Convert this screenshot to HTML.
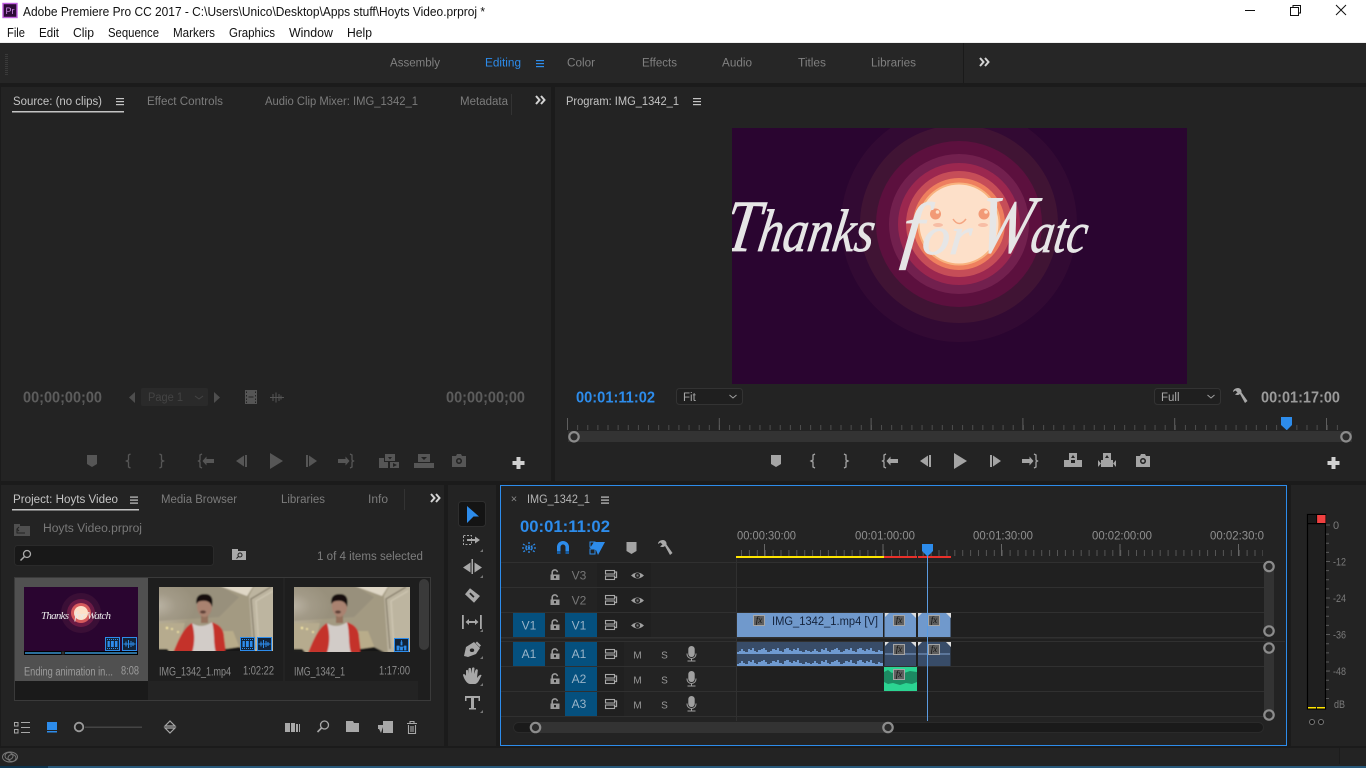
<!DOCTYPE html>
<html><head><meta charset="utf-8"><title>Adobe Premiere Pro CC 2017</title>
<style>
html,body{margin:0;padding:0;width:1366px;height:768px;overflow:hidden;background:#1b1b1b}
svg{display:block;font-family:"Liberation Sans",sans-serif;font-size:11.5px}
text{white-space:pre}
</style></head><body>
<svg width="1366" height="768" viewBox="0 0 1366 768" xmlns="http://www.w3.org/2000/svg">
<defs>
<clipPath id="vc"><rect x="732" y="128" width="455" height="256"/></clipPath>
<clipPath id="tc"><rect x="0" y="0" width="114" height="64"/></clipPath>
<clipPath id="tc3"><rect x="0" y="0" width="116" height="65"/></clipPath>
<filter id="bl1" x="-5%" y="-5%" width="110%" height="110%"><feGaussianBlur stdDeviation="0.8"/></filter>
<radialGradient id="glow" cx="0" cy="0.45" r="0.55"><stop offset="0" stop-color="#efe8da"/><stop offset="0.5" stop-color="#b9b09b"/><stop offset="1" stop-color="#a39a82"/></radialGradient>
<g id="ham"><rect x="0" y="0" width="8" height="1.2"/><rect x="0" y="3" width="8" height="1.2"/><rect x="0" y="6" width="8" height="1.2"/></g>
<g id="marker" fill="currentColor"><path d="M-5-6H5V3L0 6-5 3Z"/></g>
<g id="bl" fill="none" stroke="currentColor" stroke-width="1.3"><path d="M1.5-7-.5-6V-1L-2.5 0-.5 1V6L1.5 7"/></g>
<g id="br" fill="none" stroke="currentColor" stroke-width="1.3"><path d="M-1.5-7 .5-6V-1L2.5 0 .5 1V6L-1.5 7"/></g>
<g id="gin"><path fill="none" stroke="currentColor" stroke-width="1.3" d="M-5-7-7-6V-1L-8.5 0-7 1V6L-5 7"/><path fill="currentColor" d="M-4.5 0-.5-4.5V-2H7V2H-.5V4.5Z"/></g>
<g id="gout"><path fill="none" stroke="currentColor" stroke-width="1.3" d="M5-7 7-6V-1L8.5 0 7 1V6L5 7"/><path fill="currentColor" d="M4.5 0 .5-4.5V-2H-7V2H.5V4.5Z"/></g>
<g id="sb" fill="currentColor"><path d="M3-5.5-5 0 3 5.5Z"/><rect x="4" y="-6" width="2" height="12"/></g>
<g id="sf" fill="currentColor"><path d="M-3-5.5 5 0-3 5.5Z"/><rect x="-6" y="-6" width="2" height="12"/></g>
<g id="play" fill="currentColor"><path d="M-6-8 7 0-6 8Z"/></g>
<g id="lift" fill="currentColor"><path d="M-9 0H-2V7H-9ZM2 0H9V7H2ZM-2 7H2V3H-2Z"/><path d="M-4-7H4V0H-4ZM-2-2H2L0-5Z" fill-rule="evenodd"/></g>
<g id="extr" fill="currentColor"><path d="M-4-7H4V0H-4ZM-2-2H2L0-5Z" fill-rule="evenodd"/><path d="M-6 0H6V7H-6ZM-9 0V7L-6 3.5ZM9 0V7L6 3.5Z"/></g>
<g id="ins" fill="currentColor"><path d="M-4-7H6V0H-4ZM-1-4H3L1-1.5Z" fill-rule="evenodd"/><path d="M-10-3H-5V1H-1V7H-10ZM1 1H10V7H1ZM4 2V6L8 4Z" fill-rule="evenodd"/></g>
<g id="ovr" fill="currentColor"><path d="M-6-7H6V1H-6ZM-3-4H3L0-1Z" fill-rule="evenodd"/><path d="M-10 2H10V7H-10Z"/></g>
<g id="cam" fill="currentColor"><path d="M-7-5H-3L-2-7H2L3-5H7V6H-7ZM0-3A3 3 0 1 0 .01-3ZM0-1.5A1.5 1.5 0 1 1-.01-1.5Z" fill-rule="evenodd"/></g>
<g id="plus" fill="currentColor"><rect x="-6" y="-2" width="12" height="4"/><rect x="-2" y="-6" width="4" height="12"/></g>
<g id="wrench" fill="currentColor"><path d="M-2-8C-5-8-7-6-7-4L-4.5-5.5-2.5-3.5-5-1.5C-3-.5-1-1 0-2L5 7 7.5 5 1.5-3.5C2-6 0-8-2-8Z"/></g>
<g id="dbl" fill="none" stroke="#d4d4d4" stroke-width="2"><path d="M0-4 3.5 0 0 4M5-4 8.5 0 5 4"/></g>
<g id="chev" fill="none" stroke="#a0a0a0" stroke-width="1"><path d="M-3.5-1.5 0 1.5 3.5-1.5"/></g>
<g id="lock"><path d="M-2.8 0V-2.2A2.6 2.6 0 0 1 2.4-2.8" fill="none" stroke="#9a9a9a" stroke-width="1.6"/><path fill="#9a9a9a" d="M-4.5-.5H4.5V5H-4.5ZM-1 1V3.2H1V1Z" fill-rule="evenodd"/></g>
<g id="sync" fill="none" stroke="#a8a8a8" stroke-width="1.1"><rect x="-5.500" y="-4.500" width="9" height="3.500"/><rect x="-5.500" y="1" width="9" height="3.500"/><path d="M3.500-3H5.500V2.500H3.500" stroke-width="1.300"/></g>
<g id="eye"><path fill="#a0a0a0" d="M-6.5 0Q0-6 6.5 0 0 6-6.5 0Z"/><circle r="2.6" fill="#252525"/><circle r="1.1" fill="#777"/></g>
<g id="mic" fill="none" stroke="#a0a0a0" stroke-width="1"><rect x="-2.7" y="-7.5" width="5.4" height="10" rx="2.7" fill="#a0a0a0"/><path d="M-4.5-.5V0A4.5 4.5 0 0 0 4.5 0V-.5M0 4.5V6.5M-4 7H4"/></g>
<g id="fx"><rect x=".5" y=".5" width="11" height="10" fill="#5e5e5e" stroke="#a5a5a5"/><text x="6" y="8" text-anchor="middle" font-family="Liberation Serif" font-style="italic" font-size="9" fill="#111">fx</text></g>
<g id="circ"><circle r="4.7" fill="#2b2b2b" stroke="#8c8c8c" stroke-width="2.2"/></g>
<g id="tri"><path d="M3 0V3H0Z" fill="#777"/></g>
<pattern id="wave" width="73" height="12" patternUnits="userSpaceOnUse" x="737" y="642">
<path fill="#6f9ad0" d="M0 12V10H2V9H4V7H6V9H8V10H11V7H13V8H15V6H17V9H19V10H21V8H24V7H26V6H28V8H30V10H33V9H35V7H38V8H40V6H42V9H45V10H47V7H49V6H52V8H54V9H56V7H58V8H60V6H62V9H65V10H68V8H70V9H73V12Z"/></pattern>
<g id="photo">
<g filter="url(#bl1)">
<rect x="-2" y="-2" width="120" height="70" fill="#a39a82"/>
<rect x="-2" y="-2" width="70" height="46" fill="url(#glow)"/>
<path d="M-2-2H60L80 10 60 30 0 34Z" fill="#8f8878" opacity=".55"/>
<path d="M58-2H95L88 9Z" fill="#dfd7c6"/>
<path d="M90 9 96-2H118V68H94Z" fill="#bdb5a0"/>
<path d="M96 62 92 12 112 0" fill="none" stroke="#7f7664" stroke-width="1.200"/>
<path d="M100 60 97 14 114 4" fill="none" stroke="#d4ccb8" stroke-width="1"/>
<path d="M-2 36H26L18 68H-2Z" fill="#b6ab8e"/>
<path d="M62 44 74 44 82 64H62Z" fill="#b8ac8a"/>
<g fill="#f6e7a4"><circle cx="8" cy="41" r="1.200"/><circle cx="13" cy="42" r="1"/><circle cx="19" cy="45" r="1"/></g>
<path d="M33 36C24 41 19 54 14 66H38L40 42Z" fill="#c4322c"/>
<path d="M52 35C60 37 65 42 65 50L67 66H54L50 42Z" fill="#c4322c"/>
<path d="M33 36C38 40 47 40 53 35 56 46 54 56 57 66H33C36 56 36 46 33 36Z" fill="#d2ccc8"/>
<path d="M-2 62 8 62 12 66H-2ZM66 62 80 60 92 66H66Z" fill="#181414"/>
<rect x="42" y="27" width="7" height="9" fill="#93705c"/>
<ellipse cx="45.500" cy="19" rx="7.500" ry="11" fill="#a98270"/>
<path d="M37.500 17C36 8 42 7 46 7 52 7 55 11 53 20 52 15 47 13 43 14 40 14 39 15 37.500 17Z" fill="#15110f"/>
<ellipse cx="44" cy="25" rx="3" ry="1.600" fill="#5e4038"/>
</g>
</g>
</defs>

<!-- window chrome -->
<rect width="1366" height="42" fill="#fff"/>
<rect y="42" width="1366" height="1" fill="#efefef"/>
<rect x="3" y="3.500" width="14" height="14" fill="#2c0a36" stroke="#c060e0" stroke-width="1.400"/>
<text x="5.500" y="14" font-size="9" fill="#cc8ae6">Pr</text>
<text x="23" y="16" font-size="12.5" fill="#111" textLength="462" lengthAdjust="spacingAndGlyphs">Adobe Premiere Pro CC 2017 - C:\Users\Unico\Desktop\Apps stuff\Hoyts Video.prproj *</text>
<g font-size="12.5" fill="#111">
<text x="7" y="37" textLength="18" lengthAdjust="spacingAndGlyphs">File</text>
<text x="39" y="37" textLength="20" lengthAdjust="spacingAndGlyphs">Edit</text>
<text x="73" y="37" textLength="21" lengthAdjust="spacingAndGlyphs">Clip</text>
<text x="108" y="37" textLength="51" lengthAdjust="spacingAndGlyphs">Sequence</text>
<text x="173" y="37" textLength="42" lengthAdjust="spacingAndGlyphs">Markers</text>
<text x="229" y="37" textLength="46" lengthAdjust="spacingAndGlyphs">Graphics</text>
<text x="289" y="37" textLength="44" lengthAdjust="spacingAndGlyphs">Window</text>
<text x="347" y="37" textLength="25" lengthAdjust="spacingAndGlyphs">Help</text>
</g>
<path d="M1245 10.5H1255" stroke="#111" stroke-width="1"/>
<path d="M1290.5 7.5H1298.5V15.5H1290.5ZM1293 7.5V5.5H1300.5V13H1298.5" fill="none" stroke="#111"/>
<path d="M1336 5 1346 15M1346 5 1336 15" stroke="#111" stroke-width="1"/>

<!-- workspace header -->
<rect y="43" width="1366" height="40" fill="#262626"/>
<line x1="6.500" x2="6.500" y1="54" y2="76" stroke="#3a3a3a" stroke-width="3" stroke-dasharray="1 1"/>
<g fill="#808080">
<text x="390" y="66.500" textLength="50" lengthAdjust="spacingAndGlyphs">Assembly</text>
<text x="567" y="66.500" textLength="28" lengthAdjust="spacingAndGlyphs">Color</text>
<text x="642" y="66.500" textLength="35" lengthAdjust="spacingAndGlyphs">Effects</text>
<text x="722" y="66.500" textLength="30" lengthAdjust="spacingAndGlyphs">Audio</text>
<text x="798" y="66.500" textLength="28" lengthAdjust="spacingAndGlyphs">Titles</text>
<text x="871" y="66.500" textLength="45" lengthAdjust="spacingAndGlyphs">Libraries</text>
</g>
<text x="485" y="66.500" fill="#2d8ceb" textLength="36" lengthAdjust="spacingAndGlyphs">Editing</text>
<use href="#ham" x="536" y="60" fill="#2d8ceb"/>
<rect x="963" y="43" width="1" height="40" fill="#1a1a1a"/>
<use href="#dbl" x="980" y="62"/>

<!-- panels -->
<rect x="1" y="87" width="550" height="394" fill="#232323"/>
<rect x="555" y="87" width="811" height="394" fill="#232323"/>
<rect x="1" y="485" width="443" height="261" fill="#232323"/>
<rect x="448" y="485" width="48" height="261" fill="#232323"/>
<rect x="500" y="485" width="787" height="261" fill="#232323"/>
<rect x="1291" y="485" width="75" height="261" fill="#232323"/>
<rect x="0" y="748" width="1366" height="18" fill="#232323"/>
<rect x="1339" y="748" width="1" height="16" fill="#1c1c1c"/>
<rect x="0" y="766" width="48" height="2" fill="#0d3550"/>
<rect x="48" y="766" width="1318" height="2" fill="#27587a"/>
<g fill="none" stroke="#777" stroke-width="1"><ellipse cx="10" cy="757" rx="7.500" ry="5"/><ellipse cx="9" cy="756" rx="4" ry="3.500"/><ellipse cx="12" cy="758" rx="4" ry="3.500"/></g>

<!-- source tabs -->
<text x="13" y="105" fill="#c4c4c4" textLength="89" lengthAdjust="spacingAndGlyphs">Source: (no clips)</text>
<use href="#ham" x="116" y="98" fill="#c4c4c4"/>
<rect x="12" y="111" width="112" height="1.500" fill="#c4c4c4"/>
<g fill="#7c7c7c">
<text x="147" y="105" textLength="76" lengthAdjust="spacingAndGlyphs">Effect Controls</text>
<text x="265" y="105" textLength="153" lengthAdjust="spacingAndGlyphs">Audio Clip Mixer: IMG_1342_1</text>
<text x="460" y="105" textLength="48" lengthAdjust="spacingAndGlyphs">Metadata</text>
</g>
<rect x="511" y="94" width="1" height="21" fill="#333"/>
<use href="#dbl" x="536" y="100"/>

<!-- source bottom -->
<g font-size="15.500" font-weight="bold" fill="#5c5c5c">
<text x="23" y="402.500" textLength="79" lengthAdjust="spacingAndGlyphs">00;00;00;00</text>
<text x="446" y="402.500" textLength="79" lengthAdjust="spacingAndGlyphs">00;00;00;00</text>
</g>
<rect x="141" y="388" width="67" height="18" rx="2" fill="#2a2a2a"/>
<text x="148" y="401" fill="#444" textLength="35" lengthAdjust="spacingAndGlyphs">Page 1</text>
<path d="M195 396 199 399 203 396" fill="none" stroke="#444"/>
<path d="M135 392 129 397.500 135 403ZM214 392 220 397.500 214 403Z" fill="#4e4e4e"/>
<path d="M245 390H257V404H245ZM246 391.500V393H247V391.500ZM246 395V396.500H247V395ZM246 398.500V400H247V398.500ZM246 401.500V403H247V401.500ZM255 391.500V393H256V391.500ZM255 395V396.500H256V395ZM255 398.500V400H256V398.500ZM255 401.500V403H256V401.500ZM248.500 396.500V397.500H253.500V396.500Z" fill="#555" fill-rule="evenodd"/>
<path d="M270 397.500H284M273 394V401M276 392.500V402.500M279 394V401M281 395.500V399.500" stroke="#555" stroke-width="1"/>
<g color="#565656">
<use href="#marker" x="92" y="461"/>
<use href="#bl" x="129" y="461"/>
<use href="#br" x="161" y="461"/>
<use href="#gin" x="207" y="461"/>
<use href="#sb" x="241" y="461"/>
<use href="#play" x="276" y="461"/>
<use href="#sf" x="312" y="461"/>
<use href="#gout" x="345" y="461"/>
<use href="#ins" x="389" y="461"/>
<use href="#ovr" x="424" y="461"/>
<use href="#cam" x="459" y="461"/>
</g>
<use href="#plus" x="518.500" y="463" color="#d0d0d0"/>

<!-- program -->
<text x="566" y="105" fill="#c4c4c4" textLength="113" lengthAdjust="spacingAndGlyphs">Program: IMG_1342_1</text>
<use href="#ham" x="693" y="98" fill="#c4c4c4"/>
<rect x="732" y="128" width="455" height="256" fill="#2a0530"/>
<g clip-path="url(#vc)">
<circle cx="959" cy="224" r="118" fill="#320a33"/>
<circle cx="959" cy="224" r="99" fill="#401434"/>
<circle cx="959" cy="224" r="83" fill="#5c103e"/>
<circle cx="959" cy="224" r="70" fill="#72204e"/>
<circle cx="959" cy="224" r="61" fill="#9b274f"/>
<circle cx="959" cy="224" r="53" fill="#c64d58"/>
<circle cx="959" cy="224" r="46" fill="#ee7f5e"/>
<circle cx="959" cy="224" r="41.500" fill="#f8b27e"/>
<circle cx="959" cy="224" r="39.500" fill="#fde0c9"/>
<circle cx="935.500" cy="214" r="5.500" fill="#f29a76"/><circle cx="937.500" cy="212" r="1.800" fill="#fde0c9"/>
<circle cx="984" cy="214" r="5.500" fill="#f29a76"/><circle cx="986" cy="212" r="1.800" fill="#fde0c9"/>
<ellipse cx="938" cy="225" rx="5" ry="2" fill="#f7bda5"/><ellipse cx="983" cy="225" rx="5" ry="2" fill="#f7bda5"/>
<path d="M953 219Q959 228 966 219" fill="none" stroke="#f4a582" stroke-width="1.500"/>
<g font-family="Liberation Serif" font-style="italic" fill="#e6e6e6" stroke="#e6e6e6" stroke-width=".7">
<text transform="translate(722 251) skewX(-9)" font-size="60" textLength="150" lengthAdjust="spacingAndGlyphs"><tspan font-size="74">T</tspan>hanks</text>
<text transform="translate(900 254) skewX(-6)" font-size="54" textLength="70" lengthAdjust="spacingAndGlyphs"><tspan font-size="74">f</tspan>or</text>
<text transform="translate(975 252) skewX(-9)" font-size="58" textLength="110" lengthAdjust="spacingAndGlyphs"><tspan font-size="82">W</tspan>atc</text>
</g>
</g>
<g font-size="15.500" font-weight="bold">
<text x="576" y="402.500" fill="#2d8ceb" textLength="79" lengthAdjust="spacingAndGlyphs">00:01:11:02</text>
<text x="1261" y="402.500" fill="#9a9a9a" textLength="79" lengthAdjust="spacingAndGlyphs">00:01:17:00</text>
</g>
<rect x="676.500" y="388.500" width="66" height="16" rx="3" fill="#1f1f1f" stroke="#333"/>
<text x="683" y="401" fill="#a8a8a8" font-size="11.500">Fit</text>
<use href="#chev" x="733" y="396.500"/>
<rect x="1154.500" y="388.500" width="66" height="16" rx="3" fill="#1f1f1f" stroke="#333"/>
<text x="1161" y="401" fill="#a8a8a8" font-size="11.500">Full</text>
<use href="#chev" x="1211" y="396.500"/>
<use href="#wrench" x="1240" y="396" color="#a8a8a8"/>
<line x1="567" x2="1346" y1="427.500" y2="427.500" stroke="#4e4e4e" stroke-width="5" stroke-dasharray="1 9.130"/>
<line x1="567" x2="1346" y1="424" y2="424" stroke="#5e5e5e" stroke-width="12" stroke-dasharray="1 150.800"/>
<rect x="568" y="431" width="784" height="11" fill="#333"/>
<use href="#circ" x="574" y="436.800"/>
<use href="#circ" x="1346" y="436.800"/>
<path d="M1281 417H1292V425L1287 430 1286.500 430 1281 425Z" fill="#2d8ceb"/>
<g color="#a4a4a4">
<use href="#marker" x="776" y="461"/>
<use href="#bl" x="813.500" y="461"/>
<use href="#br" x="845.500" y="461"/>
<use href="#gin" x="891" y="461"/>
<use href="#sb" x="925" y="461"/>
<use href="#play" x="960" y="461"/>
<use href="#sf" x="996" y="461"/>
<use href="#gout" x="1029" y="461"/>
<use href="#lift" x="1073" y="460"/>
<use href="#extr" x="1107" y="460"/>
<use href="#cam" x="1143" y="461"/>
</g>
<use href="#plus" x="1333.500" y="463" color="#d0d0d0"/>

<!-- project -->
<text x="13" y="503" fill="#c4c4c4" textLength="105" lengthAdjust="spacingAndGlyphs">Project: Hoyts Video</text>
<use href="#ham" x="130" y="496.500" fill="#c4c4c4"/>
<rect x="12" y="509" width="127" height="1.500" fill="#c4c4c4"/>
<g fill="#7c7c7c">
<text x="161" y="503" textLength="76" lengthAdjust="spacingAndGlyphs">Media Browser</text>
<text x="281" y="503" textLength="44" lengthAdjust="spacingAndGlyphs">Libraries</text>
<text x="368" y="503" textLength="20" lengthAdjust="spacingAndGlyphs">Info</text>
</g>
<rect x="404" y="489" width="1" height="21" fill="#333"/>
<use href="#dbl" x="431" y="498"/>
<path d="M14 524H20V526H30V536H14Z" fill="#4f4f4f"/><path d="M19 527 17 529 19 531M17 529V533H25" fill="none" stroke="#222"/>
<text x="43" y="532" fill="#787878" textLength="99" lengthAdjust="spacingAndGlyphs">Hoyts Video.prproj</text>
<rect x="14.500" y="545.500" width="199" height="20" rx="3" fill="#181818" stroke="#2a2a2a"/>
<circle cx="27" cy="554" r="3.500" fill="none" stroke="#aaa" stroke-width="1.300"/><path d="M24.500 556.500 20.500 560.500" stroke="#aaa" stroke-width="1.500"/>
<path d="M232 549H238V551H246V560H232Z" fill="#aaa"/><circle cx="240" cy="555" r="2" fill="none" stroke="#222"/><path d="M238.500 556.500 236.500 558.500" stroke="#222"/>
<text x="317" y="560" fill="#7e7e7e" textLength="106" lengthAdjust="spacingAndGlyphs">1 of 4 items selected</text>
<rect x="14.500" y="577.500" width="416" height="123" fill="#1e1e1e" stroke="#3a3a3a"/>
<rect x="15" y="578" width="133" height="122" fill="#1a1a1a"/>
<rect x="148" y="681" width="270" height="19" fill="#232323"/>
<rect x="15" y="578" width="133" height="103" fill="#505050"/>
<rect x="283" y="578" width="2" height="103" fill="#232323"/>
<rect x="419" y="579" width="10" height="71" rx="5" fill="#3a3a3a"/>
<!-- thumb 1 -->
<rect x="24" y="587" width="114" height="64" fill="#2a0530"/>
<circle cx="81" cy="613" r="20" fill="#3a0f36"/><circle cx="81" cy="613" r="14" fill="#6a1a44"/><circle cx="81" cy="613" r="10" fill="#d65a5c"/><circle cx="81" cy="613" r="7" fill="#fde0c9"/>
<text x="41" y="619" font-family="Liberation Serif" font-style="italic" font-size="11" fill="#e8e8e8" textLength="70" lengthAdjust="spacing">Thanks   for Watch</text>
<rect x="24" y="651" width="114" height="4" fill="#000"/>
<rect x="25" y="652" width="36" height="2" fill="#2b6e9c"/><rect x="65" y="652" width="72" height="2" fill="#2b6e9c"/>
<rect x="61.500" y="651.500" width="3" height="3" fill="#333"/>
<text x="24" y="675.500" fill="#9c9c9c" textLength="89" lengthAdjust="spacingAndGlyphs">Ending animation in...</text>
<text x="121" y="674.500" fill="#9c9c9c" textLength="18" lengthAdjust="spacingAndGlyphs">8:08</text>
<!-- thumb 2 -->
<g clip-path="url(#tc)" transform="translate(159 587)"><use href="#photo"/></g>
<text x="159" y="675.500" fill="#8c8c8c" textLength="72" lengthAdjust="spacingAndGlyphs">IMG_1342_1.mp4</text>
<text x="243" y="674.500" fill="#8c8c8c" textLength="31" lengthAdjust="spacingAndGlyphs">1:02:22</text>
<!-- thumb 3 -->
<g clip-path="url(#tc3)" transform="translate(294 587)"><use href="#photo"/></g>
<text x="294" y="675.500" fill="#8c8c8c" textLength="51" lengthAdjust="spacingAndGlyphs">IMG_1342_1</text>
<text x="379" y="674.500" fill="#8c8c8c" textLength="31" lengthAdjust="spacingAndGlyphs">1:17:00</text>
<!-- badges -->
<g id="bA">
<rect x="105.500" y="637.500" width="14" height="13" fill="#12243a" stroke="#2d8ceb"/>
<path d="M107.500 641H109.800V647H107.500ZM111 641H113.800V647H111ZM115 641H117.500V647H115Z" fill="#2d8ceb"/>
<path d="M107 639.500H118M107 648.500H118" stroke="#2d8ceb" stroke-dasharray="1 1"/>
<rect x="122.500" y="637.500" width="14" height="13" fill="#12243a" stroke="#2d8ceb"/>
<path d="M123.500 644H135.500M126 641.500V646.500M128.500 640V648M131 641V647M133 642V646" stroke="#2d8ceb" stroke-width="1"/>
</g>
<use href="#bA" x="135" y="0"/>
<rect x="394.500" y="638.500" width="14" height="13" fill="#12243a" stroke="#2d8ceb"/>
<path d="M401.500 640V643M401 642H402V645H401ZM396.500 647H406.500M397 646V650H399V646ZM400.500 647V650H402.500V647ZM404.500 646V650H406V646Z" fill="#2d8ceb" stroke="#2d8ceb" stroke-width=".8"/>
<!-- project bottom -->
<g fill="none" stroke="#a8a8a8"><rect x="14.500" y="722.500" width="3.500" height="3.500"/><rect x="14.500" y="729.500" width="3.500" height="3.500"/><path d="M21 722.500H30M21 727.500H30M21 732.500H30"/></g>
<rect x="47" y="722" width="10" height="8" fill="#2d8ceb"/><rect x="47" y="731" width="10" height="1.500" fill="#2d8ceb"/>
<rect x="85" y="726.500" width="57" height="1.500" fill="#444"/>
<circle cx="79" cy="727" r="4.300" fill="#222" stroke="#9a9a9a" stroke-width="1.800"/>
<path d="M170 721 175 726H165ZM170 733 175 728H165Z" fill="none" stroke="#a8a8a8" stroke-width="1.200"/>
<path d="M285 723H290V732H285ZM291 723H295V732H291ZM296 724H298V732H296ZM299 724H300V732H299Z" fill="#a8a8a8"/>
<circle cx="324.500" cy="725" r="4" fill="none" stroke="#a8a8a8" stroke-width="1.300"/><path d="M321.500 728 317.500 732" stroke="#a8a8a8" stroke-width="1.600"/>
<path d="M346 721H353L354 723H359V732H346Z" fill="#a8a8a8"/>
<path d="M383 721H393V733H383V729H378V725H383Z" fill="#a8a8a8"/><path d="M378 727H383V733Z" fill="#232323"/><path d="M378 727H383L381 733Z" fill="#a8a8a8"/>
<path d="M407 723.500H417M410 723V721.500H414V723M408.500 725V733.500H415.500V725M411 726V732M413 726V732" fill="none" stroke="#a8a8a8" stroke-width="1.100"/>

<!-- tools -->
<rect x="458.500" y="501.500" width="27" height="25" rx="3" fill="#141414" stroke="#2e2e2e"/>
<path d="M467 506 479 516.500 473.500 516.500 467 523Z" fill="#2d8ceb"/>
<g fill="#a8a8a8">
<rect x="463.500" y="535.500" width="8" height="9" fill="none" stroke="#a8a8a8" stroke-dasharray="2 1.500"/>
<path d="M467 539H475V536.500L480 540 475 543.500V541H467Z"/>
<rect x="471.500" y="559" width="1.500" height="15"/>
<path d="M463 567.500 470.500 562.500V572.500ZM482 567.500 474.500 562.500V572.500Z"/>
<path d="M470 588.300 465 594.300 474 602.700 480 596ZM470.500 592.500 474.500 596.500 473.300 597.700 469.300 593.700Z" fill-rule="evenodd"/>
<rect x="462" y="615" width="1.800" height="14"/><rect x="480" y="615" width="1.800" height="14"/>
<path d="M465.500 622 469 619V621H475V619L478.500 622 475 625V623H469V625Z"/>
<path d="M464 656 466 647 474 642 480 648 476 654 468 657ZM472 648.500A1.800 1.800 0 1 0 472 652 1.800 1.800 0 1 0 472 648.500Z" fill-rule="evenodd"/>
<path d="M477 641.500 481 645.500 479.500 647 475.500 643Z"/>
<path d="M466 676V671C466 669.500 468 669.500 468 671V674L468.500 669C468.500 667.500 471 667.500 471 669L471.200 673.500 472 668.500C472.300 667 474.500 667 474.500 668.500L474 674 475.500 670C476 668.800 478 669 477.800 670.500L477 678C479 675 481 674 481.500 675.500 479 680 478 684 474.500 684H470C467 684 464 679 463 675 463 673.500 465.500 674 466 676Z"/>
<path d="M465 696H480V701H478.500V698H474V708H476V709.500H469V708H471V698H466.500V701H465Z"/>
</g>
<use href="#tri" x="480" y="549"/><use href="#tri" x="480" y="575"/><use href="#tri" x="480" y="629"/><use href="#tri" x="480" y="656"/><use href="#tri" x="480" y="683"/><use href="#tri" x="480" y="710"/>

<!-- timeline -->
<rect x="737" y="563" width="527" height="154" fill="#202020"/>
<rect x="597" y="563" width="54" height="74" fill="#202020"/>
<rect x="597" y="642" width="27" height="75" fill="#202020"/>
<g fill="#303030">
<rect x="501" y="562" width="763" height="1"/><rect x="501" y="587" width="763" height="1"/><rect x="501" y="612" width="763" height="1"/>
<rect x="501" y="637" width="763" height="1.500"/><rect x="501" y="641" width="784" height="1"/><rect x="501" y="666" width="763" height="1"/><rect x="501" y="691" width="763" height="1"/><rect x="501" y="716" width="763" height="1"/>
<rect x="736" y="556" width="1" height="165"/>
</g>
<text x="514" y="502.500" text-anchor="middle" fill="#888" font-size="11">×</text>
<text x="527" y="503" fill="#b4b4b4" textLength="63" lengthAdjust="spacingAndGlyphs">IMG_1342_1</text>
<use href="#ham" x="601" y="496.500" fill="#c4c4c4"/>
<text x="520" y="532" fill="#2d8ceb" font-size="17" font-weight="bold" textLength="90" lengthAdjust="spacingAndGlyphs">00:01:11:02</text>
<g stroke="#2d8ceb" stroke-width="1.300" fill="none"><path d="M529 542V554M523 544 535 552M535 544 523 552M522 548H536" stroke-dasharray="2 1"/></g>
<path d="M557 554V547A6 6 0 0 1 569 547V554H565.500V547A2.500 2.500 0 0 0 560.500 547V554Z" fill="#2d8ceb"/>
<rect x="557" y="551" width="3.500" height="3" fill="#175a9c"/><rect x="565.500" y="551" width="3.500" height="3" fill="#175a9c"/>
<path d="M590 542H595V547H590ZM590 549H595V554H590Z" fill="none" stroke="#2d8ceb"/><path d="M594 542H605L598 555 596 550 590 548Z" fill="#2d8ceb"/>
<use href="#marker" x="631.500" y="548" color="#a4a4a4"/>
<use href="#wrench" x="665" y="548" color="#a8a8a8"/>
<g font-size="11.500" fill="#909090">
<text x="737" y="539.500" textLength="59" lengthAdjust="spacingAndGlyphs">00:00:30:00</text>
<text x="855" y="539.500" textLength="60" lengthAdjust="spacingAndGlyphs">00:01:00:00</text>
<text x="973" y="539.500" textLength="60" lengthAdjust="spacingAndGlyphs">00:01:30:00</text>
<text x="1092" y="539.500" textLength="60" lengthAdjust="spacingAndGlyphs">00:02:00:00</text>
<text x="1210" y="539.500" textLength="54" lengthAdjust="spacingAndGlyphs">00:02:30:0</text>
</g>
<line x1="741" x2="1263" y1="553" y2="553" stroke="#555" stroke-width="6" stroke-dasharray="1 6.900"/>
<line x1="764" x2="1263" y1="550" y2="550" stroke="#666" stroke-width="12" stroke-dasharray="1 117.500"/>
<rect x="736" y="556" width="148" height="2" fill="#ffe600"/>
<rect x="884" y="556" width="33" height="2" fill="#e8302a"/><rect x="918" y="556" width="33" height="2" fill="#e8302a"/>
<!-- track headers -->
<g fill="#05507e">
<rect x="513" y="613" width="32" height="24"/><rect x="513" y="642" width="32" height="24"/>
<rect x="565" y="613" width="32" height="24"/><rect x="565" y="642" width="32" height="24"/><rect x="565" y="667" width="32" height="24"/><rect x="565" y="692" width="32" height="24"/>
</g>
<g font-size="12" text-anchor="middle">
<text x="579" y="579.500" fill="#777">V3</text><text x="579" y="604.500" fill="#777">V2</text>
<text x="529" y="629.500" fill="#9ab4c8">V1</text><text x="579" y="629.500" fill="#9ab4c8">V1</text>
<text x="529" y="658" fill="#9ab4c8">A1</text><text x="579" y="658" fill="#9ab4c8">A1</text>
<text x="579" y="683" fill="#9ab4c8">A2</text><text x="579" y="708" fill="#9ab4c8">A3</text>
</g>
<use href="#lock" x="555" y="575"/><use href="#lock" x="555" y="600"/><use href="#lock" x="555" y="625"/><use href="#lock" x="555" y="654"/><use href="#lock" x="555" y="679"/><use href="#lock" x="555" y="704"/>
<use href="#sync" x="611" y="575"/><use href="#sync" x="611" y="600"/><use href="#sync" x="611" y="625"/><use href="#sync" x="611" y="654"/><use href="#sync" x="611" y="679"/><use href="#sync" x="611" y="704"/>
<use href="#eye" x="637.500" y="575.500"/><use href="#eye" x="637.500" y="600.500"/><use href="#eye" x="637.500" y="625.500"/>
<g font-size="10" fill="#999" text-anchor="middle">
<text x="637.500" y="658.500">M</text><text x="664.500" y="658.500">S</text>
<text x="637.500" y="683.500">M</text><text x="664.500" y="683.500">S</text>
<text x="637.500" y="708.500">M</text><text x="664.500" y="708.500">S</text>
</g>
<use href="#mic" x="691.500" y="654"/><use href="#mic" x="691.500" y="679"/><use href="#mic" x="691.500" y="704"/>
<!-- clips -->
<g fill="#7099cc">
<rect x="737" y="613" width="146" height="24"/><rect x="884.500" y="613" width="31.500" height="24"/><rect x="918" y="613" width="32.500" height="24"/>
</g>
<path d="M885 613H889L885 617ZM918 613H922L918 617ZM911 613H916V618ZM946 613H951V618Z" fill="#ddd"/>
<use href="#fx" x="753" y="615"/><use href="#fx" x="893" y="615"/><use href="#fx" x="928" y="615"/>
<text x="772" y="625" fill="#14233c" font-size="11.500" textLength="106" lengthAdjust="spacingAndGlyphs">IMG_1342_1.mp4 [V]</text>
<g fill="#384c68">
<rect x="737" y="642" width="146" height="24"/><rect x="884.500" y="642" width="31.500" height="24"/><rect x="918" y="642" width="32.500" height="24"/>
</g>
<rect x="737" y="642" width="146" height="12" fill="url(#wave)"/>
<g transform="translate(0 12)"><rect x="737" y="642" width="146" height="12" fill="url(#wave)"/></g>
<path d="M885 654H916M918 654H950" stroke="#7fa0cc"/>
<path d="M885 642H889L885 646ZM918 642H922L918 646ZM911 642H916V647ZM946 642H951V647Z" fill="#ddd"/>
<use href="#fx" x="893" y="644"/><use href="#fx" x="928" y="644"/>
<rect x="884" y="667" width="33" height="24" fill="#2bd492"/>
<path d="M884 672 888 670 892 673 897 671 904 673 910 671 917 672V682L912 684 906 683 900 685 893 683 888 684 884 682Z" fill="#1c8a62"/>
<use href="#fx" x="893" y="669"/>
<rect x="927" y="553" width="1" height="168" fill="#5b9be0"/>
<path d="M922 544H933V551L928 556H927L922 551Z" fill="#2d8ceb"/>
<!-- timeline scrollbars -->
<rect x="513.500" y="722.500" width="750" height="10" rx="5" fill="#1a1a1a" stroke="#2a2a2a"/>
<rect x="535" y="722" width="353" height="11" fill="#333"/>
<use href="#circ" x="535.500" y="727.500"/><use href="#circ" x="888" y="727.500"/>
<rect x="1264" y="566" width="10" height="65" fill="#333"/><rect x="1264" y="648" width="10" height="67" fill="#333"/>
<use href="#circ" x="1269" y="566.500"/><use href="#circ" x="1269" y="631"/><use href="#circ" x="1269" y="648"/><use href="#circ" x="1269" y="715"/>
<rect x="500.500" y="485.500" width="786" height="260" fill="none" stroke="#2d8ceb"/>

<!-- meter -->
<rect x="1307.500" y="514.500" width="18" height="194.500" fill="#1f1f1f" stroke="#000" stroke-width="1.200"/>
<rect x="1308" y="515" width="8.500" height="8" fill="#1a1a1a"/>
<rect x="1317" y="515" width="8.500" height="8" fill="#f04040"/>
<rect x="1308" y="523" width="18" height="1.200" fill="#000"/>
<rect x="1316.300" y="515" width=".8" height="8" fill="#000"/>
<rect x="1308" y="707" width="8" height="1.500" fill="#ffe600"/><rect x="1317" y="707" width="8" height="1.500" fill="#ffe600"/>
<line x1="1327.500" x2="1327.500" y1="524.500" y2="706" stroke="#5a5a5a" stroke-width="3" stroke-dasharray="1 8.130"/>
<line x1="1328" x2="1328" y1="524.500" y2="706" stroke="#5a5a5a" stroke-width="4" stroke-dasharray="1 35.500"/>
<g font-size="11" fill="#7a7a7a">
<text x="1333" y="529">0</text>
<text x="1333" y="565.500" textLength="13" lengthAdjust="spacingAndGlyphs">-12</text>
<text x="1333" y="602" textLength="13" lengthAdjust="spacingAndGlyphs">-24</text>
<text x="1333" y="638.500" textLength="13" lengthAdjust="spacingAndGlyphs">-36</text>
<text x="1333" y="675" textLength="13" lengthAdjust="spacingAndGlyphs">-48</text>
<text x="1334" y="708" textLength="11" lengthAdjust="spacingAndGlyphs">dB</text>
</g>
<circle cx="1312" cy="722" r="2.500" fill="#111" stroke="#777"/><circle cx="1321" cy="722" r="2.500" fill="#111" stroke="#777"/>
</svg>
</body></html>
